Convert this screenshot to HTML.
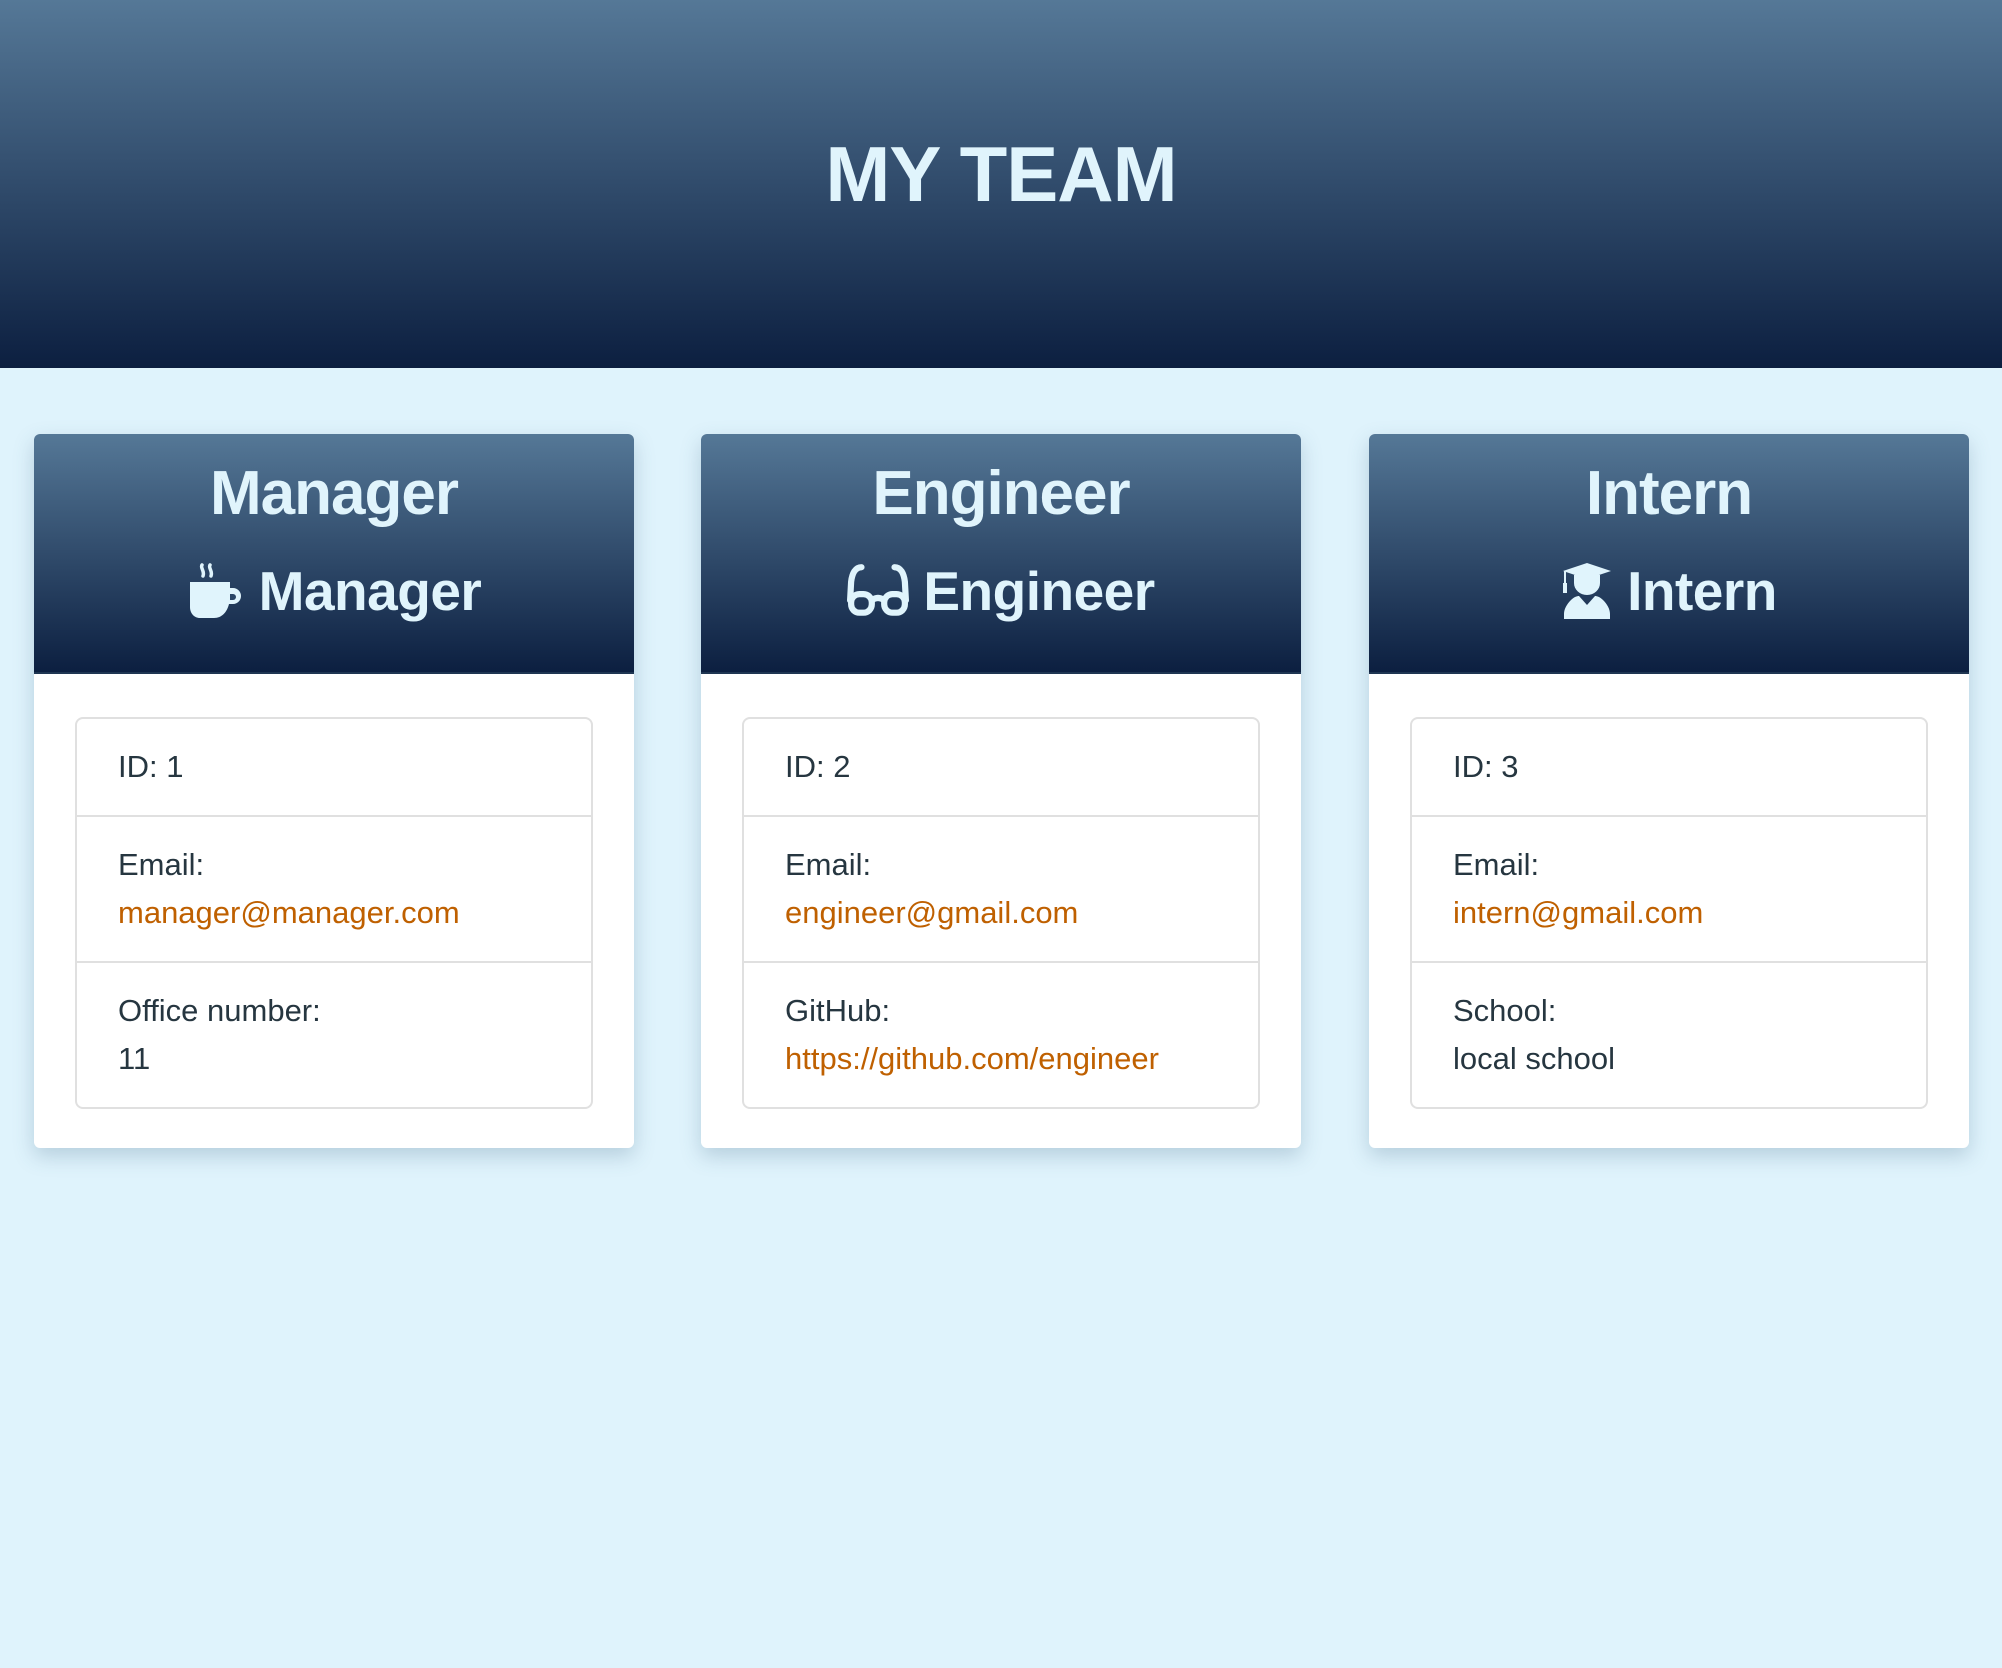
<!DOCTYPE html>
<html><head><meta charset="utf-8"><style>
*{box-sizing:border-box;margin:0;padding:0}
body{width:2002px;height:1668px;background:#dff3fc;font-family:"Liberation Sans",Arial,sans-serif;position:relative;overflow:hidden}
.top{position:absolute;left:0;top:0;width:2002px;height:368px;background:linear-gradient(#557897,#0c1f40)}
.top h1{position:absolute;left:0;right:0;top:124px;text-align:center;font-size:78px;line-height:100px;color:#e0f4fc;font-weight:bold;letter-spacing:-1px}
.card{position:absolute;top:434px;width:600px;height:714px;background:#fff;border-radius:6px;box-shadow:0 8px 20px rgba(60,100,130,0.25);overflow:hidden}
.hd{height:240px;background:linear-gradient(#557897,#0c1f40);color:#e0f4fc;text-align:center;border-bottom:2px solid #1f3652}
.hd .a{padding-top:22px;font-size:62px;font-weight:bold;line-height:76px;letter-spacing:-1px}
.hd .b{display:flex;justify-content:center;align-items:center;margin-top:24px;font-size:55px;font-weight:bold;line-height:70px;letter-spacing:-0.5px}
.hd .b svg{margin-right:14px}
.list{position:absolute;left:41px;right:41px;top:283px;border:2px solid #e0e0e0;border-radius:8px}
.row{padding:24px 41px;font-size:31px;line-height:48px;color:#263640}
.row+.row{border-top:2px solid #e0e0e0}
.o{color:#bf6000}
</style></head><body>
<div class="top"><h1>MY TEAM</h1></div>

<div class="card" style="left:34px">
 <div class="hd"><div class="a">Manager</div>
  <div class="b"><svg width="58" height="56" viewBox="0 0 56 56" fill="#e0f4fc"><path d="M14 2c-2 3 3 6 1 11M22 2c-2 3 3 6 1 11" stroke="#e0f4fc" stroke-width="3.5" fill="none" stroke-linecap="round"/><path d="M2 19h40v6h3a8 8 0 0 1 0 16h-4c-2 8-7 14-15 14H12C6 55 2 50 2 44z"/><path d="M42 31h3a3 3 0 0 1 0 6h-3z" fill="#2a4566"/></svg>Manager</div></div>
 <div class="list">
  <div class="row">ID: 1</div>
  <div class="row">Email:<br><span class="o">manager@manager.com</span></div>
  <div class="row">Office number:<br>11</div>
 </div>
</div>

<div class="card" style="left:701px">
 <div class="hd"><div class="a">Engineer</div>
  <div class="b"><svg width="62" height="56" viewBox="0 0 60 54" fill="none" stroke="#e0f4fc" stroke-width="6" stroke-linecap="round"><path d="M14 4c-6 0-9 6-10 14l-1 18"/><path d="M46 4c6 0 9 6 10 14l1 18"/><rect x="4" y="30" width="20" height="18" rx="8"/><rect x="36" y="30" width="20" height="18" rx="8"/><path d="M24 36c4-3 8-3 12 0"/></svg>Engineer</div></div>
 <div class="list">
  <div class="row">ID: 2</div>
  <div class="row">Email:<br><span class="o">engineer@gmail.com</span></div>
  <div class="row">GitHub:<br><span class="o">https://github.com/engineer</span></div>
 </div>
</div>

<div class="card" style="left:1369px">
 <div class="hd"><div class="a">Intern</div>
  <div class="b"><svg width="52" height="58" viewBox="0 0 52 56" fill="#e0f4fc"><path d="M26 0L50 8 26 16 2 8z"/><rect x="3" y="8" width="2" height="14"/><rect x="2" y="20" width="4" height="10"/><path d="M13 12h26v8a13 12 0 0 1-26 0z"/><path d="M10 37c3-3 6-4 8-4l8 9 8-9c2 0 5 1 8 4 4 4 7 9 7 14v5H3v-5c0-5 3-10 7-14z"/></svg>Intern</div></div>
 <div class="list">
  <div class="row">ID: 3</div>
  <div class="row">Email:<br><span class="o">intern@gmail.com</span></div>
  <div class="row">School:<br>local school</div>
 </div>
</div>
</body></html>
